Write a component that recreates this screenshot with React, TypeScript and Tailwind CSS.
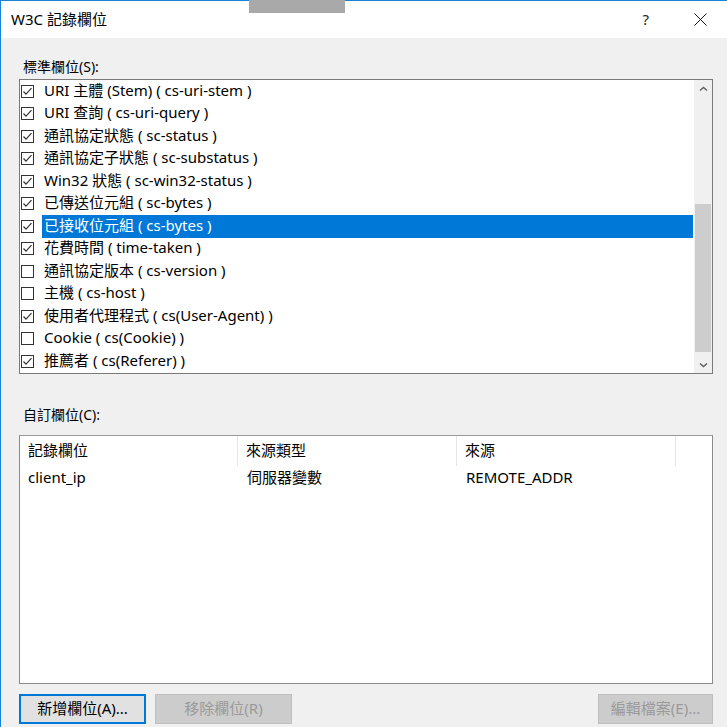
import React from 'react';

type Field = { label: string; checked: boolean; selected?: boolean };

const fields: Field[] = [
	{ label: 'URI 主體 (Stem) ( cs-uri-stem )', checked: true },
	{ label: 'URI 查詢 ( cs-uri-query )', checked: true },
	{ label: '通訊協定狀態 ( sc-status )', checked: true },
	{ label: '通訊協定子狀態 ( sc-substatus )', checked: true },
	{ label: 'Win32 狀態 ( sc-win32-status )', checked: true },
	{ label: '已傳送位元組 ( sc-bytes )', checked: true },
	{ label: '已接收位元組 ( cs-bytes )', checked: true, selected: true },
	{ label: '花費時間 ( time-taken )', checked: true },
	{ label: '通訊協定版本 ( cs-version )', checked: false },
	{ label: '主機 ( cs-host )', checked: false },
	{ label: '使用者代理程式 ( cs(User-Agent) )', checked: true },
	{ label: 'Cookie ( cs(Cookie) )', checked: false },
	{ label: '推薦者 ( cs(Referer) )', checked: true },
];

const CheckBox: React.FC<{ checked: boolean }> = ({ checked }) => (
	<svg width="13" height="13" viewBox="0 0 13 13" className="shrink-0">
		<rect x="0.5" y="0.5" width="12" height="12" fill="#fff" stroke="#333" />
		{checked && <polyline points="2.5,6.5 5,9.2 10.5,3.2" fill="none" stroke="#333" strokeWidth="1.2" />}
	</svg>
);

const Chevron: React.FC<{ down?: boolean }> = ({ down }) => (
	<svg width="9" height="6" viewBox="0 0 9 6">
		{down ? (
			<polyline points="1,1.5 4.5,4.5 8,1.5" fill="none" stroke="#606060" strokeWidth="1.5" />
		) : (
			<polyline points="1,4.5 4.5,1.5 8,4.5" fill="none" stroke="#606060" strokeWidth="1.5" />
		)}
	</svg>
);

const App: React.FC = () => {
	return (
		<div
			className="relative h-[727px] w-[727px] overflow-hidden border-l border-[#1883d7] bg-[#f0f0f0] text-[14px] text-black"
			style={{ fontFamily: '"Noto Sans", "Noto Sans CJK TC", sans-serif' }}
		>
			{/* Title bar */}
			<div className="flex h-[38px] items-center border-t border-[#1883d7] bg-white pl-[10px]">
				<span className="text-[15px]">W3C 記錄欄位</span>
				<div className="ml-auto flex items-center pr-[20px]">
					<span className="mr-[45px] text-[15px] text-[#222]">?</span>
					<svg width="13" height="13" viewBox="0 0 13 13">
						<path d="M0.5 0.5 L12.5 12.5 M12.5 0.5 L0.5 12.5" stroke="#111" strokeWidth="1" />
					</svg>
				</div>
			</div>

			{/* overlapping window edge at top */}
			<div className="absolute left-[248px] top-0 h-[13px] w-[96px] bg-[#a9a9a9]" />

			<div className="pl-[18px] pt-[19px]">
				<div className="h-[20px] pl-[4px] leading-[20px]">標準欄位(S):</div>

				{/* Standard fields list */}
				<div className="mt-[2px] flex h-[295px] w-[694px] border border-[#7a7a7a] bg-white text-[15px]">
					<div className="flex-1">
						{fields.map((f) => (
							<div key={f.label} className="flex h-[22.5px] items-center">
								<div className="ml-[1px] mr-[8px] flex items-center">
									<CheckBox checked={f.checked} />
								</div>
								<div
									className={
										f.selected
											? 'flex h-full flex-1 items-center bg-[#0078d7] pb-[3px] pl-[2px] text-white'
											: 'flex h-full flex-1 items-center pb-[3px] pl-[2px]'
									}
								>
									<span className="whitespace-pre">{f.label}</span>
								</div>
							</div>
						))}
					</div>
					<div className="ml-[1px] flex w-[18px] flex-col bg-[#f0f0f0]">
						<div className="flex h-[17px] items-center justify-center">
							<Chevron />
						</div>
						<div className="h-[107px]" />
						<div className="mx-[1px] h-[148px] bg-[#cdcdcd]" />
						<div className="flex-1" />
						<div className="flex h-[17px] items-center justify-center">
							<Chevron down />
						</div>
					</div>
				</div>

				<div className="mt-[31px] h-[20px] pl-[4px] leading-[20px]">自訂欄位(C):</div>

				{/* Custom fields list view */}
				<div className="mt-[10px] h-[249px] w-[694px] border border-[#8a8a8a] border-t-[#9a9a9a] bg-white text-[15px]">
					<div className="flex h-[30px]">
						<div className="flex w-[218px] items-center border-r border-[#e5e5e5] pb-[1px] pl-[8px]">記錄欄位</div>
						<div className="flex w-[219px] items-center border-r border-[#e5e5e5] pb-[1px] pl-[8px]">來源類型</div>
						<div className="flex w-[219px] items-center border-r border-[#e5e5e5] pb-[1px] pl-[8px]">來源</div>
						<div className="flex-1" />
					</div>
					<div className="flex h-[24px] items-center pb-[1px]">
						<div className="w-[218px] pl-[8px]">client_ip</div>
						<div className="w-[219px] pl-[9px]">伺服器變數</div>
						<div className="w-[219px] pl-[9px]">REMOTE_ADDR</div>
					</div>
				</div>

				{/* Buttons */}
				<div className="mt-[10px] flex w-[694px] items-center text-[15px]">
					<button className="flex h-[30px] w-[127px] items-center justify-center border-2 border-[#0078d7] bg-[#e1e1e1] pb-[1px]">
						新增欄位(A)...
					</button>
					<button className="ml-[9px] flex h-[30px] w-[137px] items-center justify-center border border-[#bfbfbf] bg-[#cccccc] pb-[1px] text-[#9a9a9a]">
						移除欄位(R)
					</button>
					<button className="ml-auto flex h-[30px] w-[115px] items-center justify-center border border-[#bfbfbf] bg-[#cccccc] pb-[1px] text-[#9a9a9a]">
						編輯檔案(E)...
					</button>
				</div>
			</div>
		</div>
	);
};

export default App;
